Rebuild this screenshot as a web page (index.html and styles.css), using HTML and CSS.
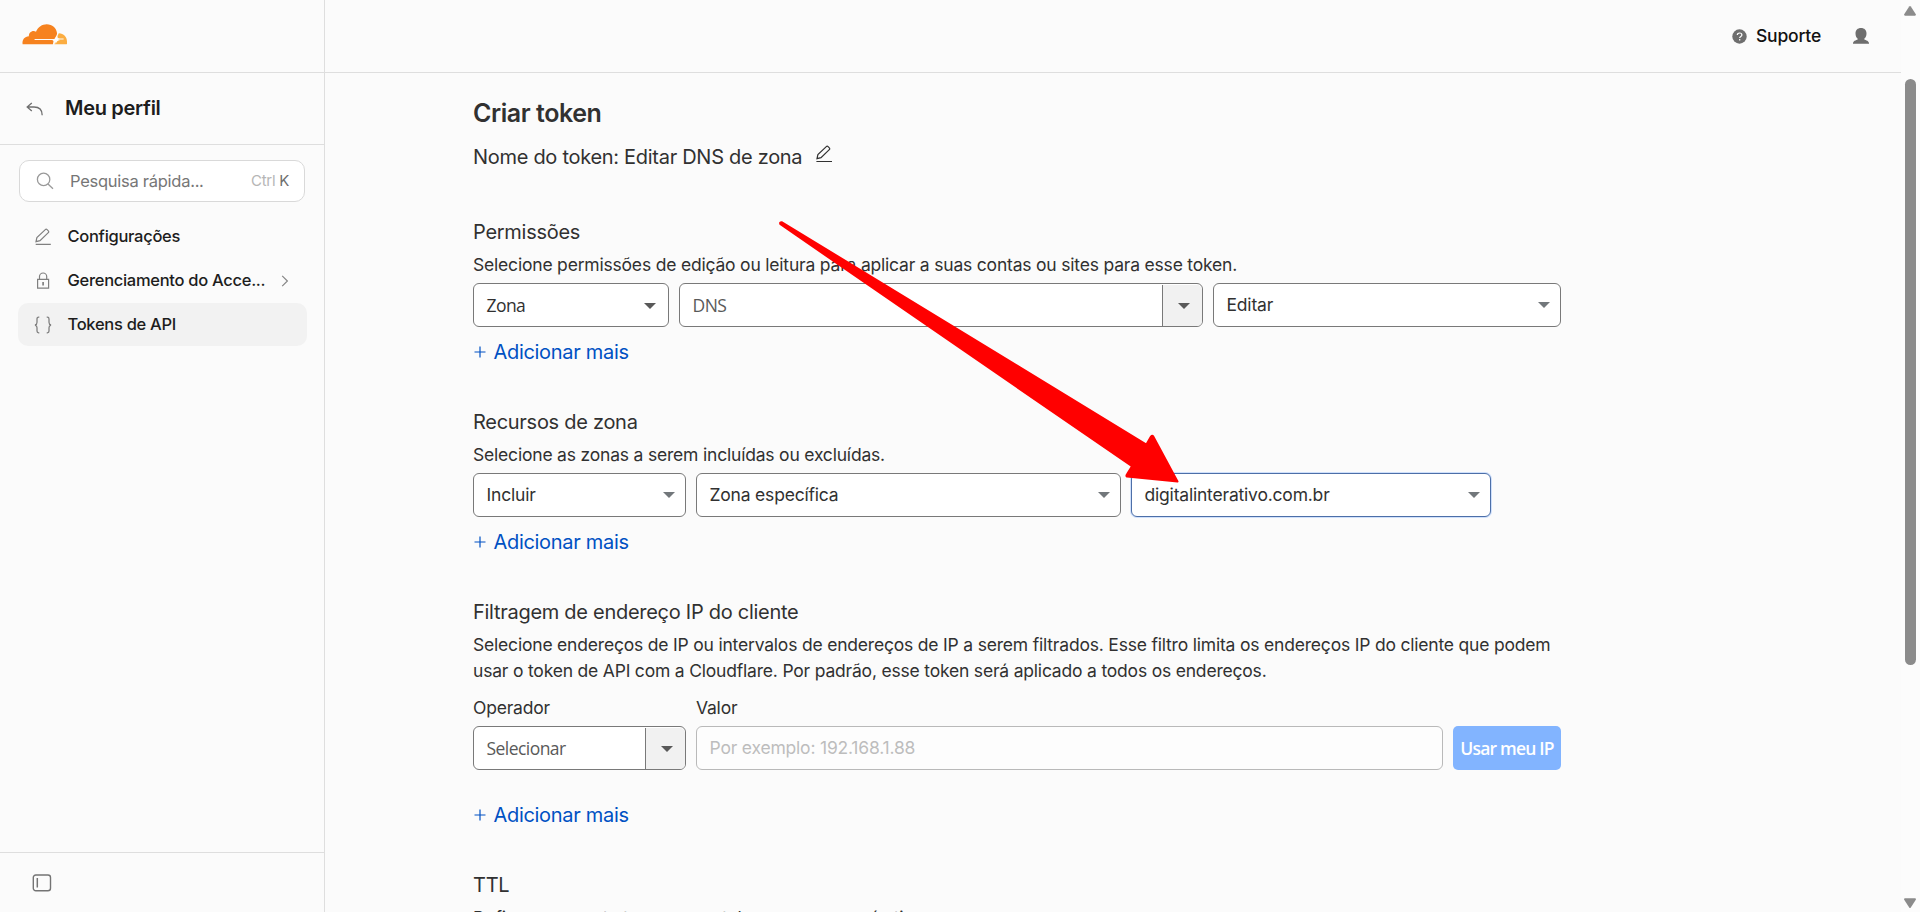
FILE: index.html
```html
<!DOCTYPE html>
<html lang="pt-BR">
<head>
<meta charset="utf-8">
<title>Criar token</title>
<link rel="stylesheet" href="styles.css">
</head>
<body>
<div class="app">
  <aside class="sidebar">
    <div class="brand">
      <svg class="logo" viewBox="0 0 46 21" width="46" height="21">
        <path fill="#fbad41" d="M36.8 9.2c5 0 8.2 3.7 8.2 8.200v2.400q0 .4-.4.4H32.500c1-3.500 2.600-4.800 5.500-4.800h3.600v-.9h-3.500c-2.200 0-3.200-1.100-2.300-3.200z"/>
        <path fill="#f6821f" d="M.6 20.200C0 15.800 2.600 12.400 6.900 12.300 6.500 8.500 10.500 5.800 14 7.700 16 3 20.200.3 24.700.3c5.600 0 9.700 3.600 10.300 8.800.2 1.700-.8 3-1.500 4.200l-1 1.700H12.600v1h18c.8.3 1 .9.800 1.700l-.5 2.500z"/>
        <path fill="#fff" d="M34.200 12.200q.4 3.300 3.900 3.800-3.500.5-4.300 3.900-.3-3.500-3.900-4 3.600-.5 4.300-3.700z"/>
      </svg>
    </div>
    <div class="profile">
      <svg class="back" viewBox="0 0 18 14" width="18" height="14" fill="none" stroke="#6f6f6f" stroke-width="1.3"><path d="M5.800 1 1.200 5l4.600 4M1.400 5H8c5.200 0 8.200 2.800 8.200 8.300"/></svg>
      <span class="profile-name">Meu perfil</span>
    </div>
    <div class="search">
      <svg viewBox="0 0 18 18" width="18" height="18" fill="none" stroke="#999" stroke-width="1.300"><circle cx="7.600" cy="7.400" r="6.200"/><path d="m12 12 5 4.800"/></svg>
      <span class="search-text">Pesquisa rápida...</span>
      <span class="keys">Ctrl <b>K</b></span>
    </div>
    <nav class="nav">
      <a class="item">
        <svg viewBox="0 0 18 18" width="18" height="18" fill="none" stroke="#808080" stroke-width="1.200"><path d="M1.700 16.300h15.100M2 13.600l.9-4L11.300 1.600q.9-.8 1.800.1l1.200 1.200q.9.9 0 1.800L6 12.700z"/></svg>
        <span>Configurações</span>
      </a>
      <a class="item">
        <svg viewBox="0 0 18 18" width="18" height="18" fill="none" stroke="#808080" stroke-width="1.200"><path d="M3.600 7.300h11v8.900h-11zM5.500 7.300V4.600a3.600 3.600 0 0 1 7.200 0v2.700"/><path stroke-width="1.700" d="M9.100 10v3.400"/></svg>
        <span>Gerenciamento do Acce...</span>
        <svg class="chev" viewBox="0 0 8 12" width="8" height="12" fill="none" stroke="#858585" stroke-width="1.200"><path d="m1.200.8 5.200 5.200-5.200 5.200"/></svg>
      </a>
      <a class="item active">
        <svg viewBox="0 0 18 18" width="18" height="18" fill="none" stroke="#808080" stroke-width="1.300"><path d="M5.300 1.200H4.700C3.400 1.200 3 2 3 3v3.200C3 7.800 2.400 8.700 1 9c1.400.3 2 1.200 2 2.800V15c0 1 .4 1.800 1.700 1.800h.6M12.700 1.200h.6C14.600 1.200 15 2 15 3v3.200c0 1.600.6 2.500 2 2.800-1.400.3-2 1.200-2 2.800V15c0 1-.4 1.800-1.700 1.800h-.6"/></svg>
        <span>Tokens de API</span>
      </a>
    </nav>
    <div class="side-foot">
      <svg viewBox="0 0 20 18" width="20" height="18" fill="none" stroke="#747474"><rect x="1.300" y="1" width="17.200" height="15.800" rx="2.500" stroke-width="1.400"/><path d="M5.300 4v9.500" stroke-width="1.500"/></svg>
    </div>
  </aside>

  <div class="page">
    <header class="topbar">
      <svg viewBox="0 0 15 15" width="15" height="15"><circle cx="7.500" cy="7.500" r="7.200" fill="#6e6e6e"/><path d="M5.300 6.100c0-1.300 1-2.100 2.300-2.100s2.300.8 2.300 1.900c0 1.600-2.200 1.500-2.200 3.200M7.700 10v1.400" fill="none" stroke="#fff" stroke-width="1.200"/></svg>
      <span class="support">Suporte</span>
      <svg class="user" viewBox="0 0 16 16" width="16" height="16"><path fill="#6e6e6e" d="M8 0c3.400 0 5.500 2.200 5.500 5.400 0 2.300-.9 4.300-2.500 5.500.3 1 4.700 1.300 5 4.100v.8H0V15c.3-2.800 4.700-3.100 5-4.100C3.400 9.700 2.500 7.700 2.500 5.400 2.500 2.200 4.600 0 8 0z"/></svg>
    </header>
    <main class="content">
      <h1 class="title">Criar token</h1>
      <div class="token-name">
        <span>Nome do token: Editar DNS de zona</span>
        <svg viewBox="0 0 18 18" width="18" height="18" fill="none" stroke="#313131" stroke-width="1.200"><path d="M1.400 16.500h15.600M2 13.600l.9-4L11.300 1.600q.9-.8 1.800.1l1.200 1.200q.9.900 0 1.800L6 12.700z"/></svg>
      </div>

      <section class="block">
        <h2>Permissões</h2>
        <p>Selecione permissões de edição ou leitura para aplicar a suas contas ou sites para esse token.</p>
        <div class="row row-perm">
          <div class="field dark-caret"><span class="sys">Zona</span><i class="caret"></i></div>
          <div class="field split"><span class="sys dns">DNS</span><span class="drop"><i class="caret"></i></span></div>
          <div class="field"><span>Editar</span><i class="caret"></i></div>
        </div>
        <a class="add"><svg viewBox="0 0 12 12" width="12" height="12"><path d="M6 .5v11M.5 6h11" stroke="#0051c3" stroke-width="1.200"/></svg><span>Adicionar mais</span></a>
      </section>

      <section class="block">
        <h2>Recursos de zona</h2>
        <p>Selecione as zonas a serem incluídas ou excluídas.</p>
        <div class="row row-zone">
          <div class="field"><span>Incluir</span><i class="caret"></i></div>
          <div class="field"><span>Zona específica</span><i class="caret"></i></div>
          <div class="field focus"><span>digitalinterativo.com.br</span><i class="caret"></i></div>
        </div>
        <a class="add"><svg viewBox="0 0 12 12" width="12" height="12"><path d="M6 .5v11M.5 6h11" stroke="#0051c3" stroke-width="1.200"/></svg><span>Adicionar mais</span></a>
      </section>

      <section class="block">
        <h2>Filtragem de endereço IP do cliente</h2>
        <p>Selecione endereços de IP ou intervalos de endereços de IP a serem filtrados. Esse filtro limita os endereços IP do cliente que podem<br>usar o token de API com a Cloudflare. Por padrão, esse token será aplicado a todos os endereços.</p>
        <div class="row row-ip labels"><span>Operador</span><span>Valor</span></div>
        <div class="row row-ip">
          <div class="field split"><span class="sys sel">Selecionar</span><span class="drop"><i class="caret"></i></span></div>
          <div class="field input"><span>Por exemplo: 192.168.1.88</span></div>
          <div class="button"><span>Usar meu IP</span></div>
        </div>
        <a class="add add-ip"><svg viewBox="0 0 12 12" width="12" height="12"><path d="M6 .5v11M.5 6h11" stroke="#0051c3" stroke-width="1.200"/></svg><span>Adicionar mais</span></a>
      </section>

      <section class="block">
        <h2>TTL</h2>
        <p>Defina por quanto tempo esse token permanecerá ativo.</p>
      </section>
    </main>
  </div>

  <div class="scrollbar">
    <svg viewBox="0 0 12 10" width="12" height="10"><path fill="#8b8b8b" d="M5.200.6q.8-1 1.600 0l5 7.600q.5 1.300-.8 1.500H1q-1.300-.2-.8-1.500z"/></svg>
    <div class="thumb"></div>
    <svg class="down" viewBox="0 0 12 10" width="12" height="10"><path fill="#8b8b8b" d="M5.200 9.400q.8 1 1.600 0l5-7.600Q12.300.5 11 .3H1Q-.3.5.2 1.800z"/></svg>
  </div>
</div>
<svg class="arrow" viewBox="0 0 1920 912" width="1920" height="912"><path fill="#f00" stroke="#f00" stroke-width="2" stroke-linejoin="round" d="M782 222.300 1146.400 444.500 1151 436.600q1.200-1.500 2.400 0L1177.500 481.500 1127 476.600q-1.200-.8 0-2.200L1132 466.300 780.500 224.300q-1.200-2.200 1.500-2z"/></svg>
</body>
</html>
```
FILE: styles.css
```css
* { box-sizing: border-box; }
body {
  margin: 0;
  background: #fbfbfb;
  color: #313131;
  font-family: Inter, "Liberation Sans", sans-serif;
  font-size: 17.5px;
  letter-spacing: -0.195px;
  overflow: hidden;
}
svg { display: block; flex: none; }
.app { display: flex; height: 912px; overflow: hidden; }

.sidebar {
  display: flex;
  flex-direction: column;
  flex: none;
  width: 325px;
  border-right: 1px solid #dedede;
}
.brand { height: 73px; padding: 24px 0 0 22px; border-bottom: 1px solid #dedede; }
.profile {
  display: flex;
  align-items: center;
  height: 72px;
  padding-left: 26px;
  border-bottom: 1px solid #dedede;
}
.profile-name { margin-left: 21px; padding-bottom: 2px; font-size: 20px; font-weight: 600; color: #1d1d1d; letter-spacing: -0.3px; }
.search {
  display: flex;
  align-items: center;
  height: 42px;
  margin: 15px 19px 0;
  padding: 0 15px 0 16px;
  background: #fff;
  border: 1px solid #d9d9d9;
  border-radius: 10px;
}
.search-text { margin-left: 16px; color: #767676; font-size: 16.5px; letter-spacing: -0.27px; }
.keys { margin-left: auto; padding-bottom: 1px; color: #b6b6b6; font-size: 15px; letter-spacing: -0.3px; }
.keys b { font-weight: 400; color: #6f6f6f; }
.nav { display: flex; flex-direction: column; gap: 1px; margin: 13px 17px 0 18px; }
.item {
  display: flex;
  align-items: center;
  height: 43px;
  padding: 0 18px 0 16px;
  border-radius: 10px;
  color: #1d1d1d;
  font-size: 16.5px;
  font-weight: 500;
  letter-spacing: -0.29px;
}
.item span { margin-left: 15.5px; padding-bottom: 2px; white-space: nowrap; }
.chev { margin-left: auto; }
.active { background: #f2f2f2; }
.side-foot { height: 60px; margin-top: auto; padding: 20.5px 0 0 31.5px; border-top: 1px solid #dedede; }

.page { flex: 1; min-width: 0; }
.topbar {
  display: flex;
  align-items: center;
  justify-content: flex-end;
  height: 73px;
  padding-right: 32px;
  border-bottom: 1px solid #dedede;
  color: #111;
}
.support { margin: 0 32px 0 9px; padding-bottom: 2px; font-weight: 500; font-size: 17.5px; }
.content { width: 1088px; margin-left: 148px; }
.title { margin: 0; padding-top: 24px; font-size: 25px; line-height: 32px; font-weight: 600; letter-spacing: -0.44px; }
.token-name { display: flex; height: 28px; margin-top: 14px; font-size: 20px; line-height: 28px; letter-spacing: -0.29px; white-space: nowrap; }
.token-name svg { margin: 2px 0 0 13px; }
.block { height: 190px; margin-top: 0; }
.token-name + .block { margin-top: 47px; }
.block h2 { margin: 0; font-size: 20px; line-height: 28px; font-weight: 400; letter-spacing: -0.28px; }
.block p { margin: 6px 0 5px; line-height: 26px; white-space: nowrap; }
.block:nth-of-type(3) { height: 273px; }
.row { display: grid; column-gap: 10px; }
.row-perm { grid-template-columns: 196px 524px 348px; }
.row-zone { grid-template-columns: 213px 425px 360px; }
.row-ip { grid-template-columns: 213px 747px 108px; }
.labels { margin-top: 11px; height: 31px; line-height: 26px; }
.field {
  display: flex;
  align-items: center;
  justify-content: space-between;
  height: 44px;
  padding: 0 10.500px 0 12.5px;
  background: #fff;
  border: 1px solid #797979;
  border-radius: 6px;
  white-space: nowrap;
}
.field > span:first-child { padding-bottom: 1.5px; }
.caret { border: 6px solid transparent; border-top: 6px solid #72777b; border-bottom: 0; }
.dark-caret .caret, .drop .caret { border-top-color: #595959; margin-top: 1px; }
.dark-caret { padding-right: 12px; }
.field > .sys { padding: 1px 0 0; font-family: "Open Sans", "Noto Sans", sans-serif; letter-spacing: -0.55px; }
.dns, .sel { color: #595959; }
.split { padding-right: 0; }
.drop {
  display: flex;
  align-items: center;
  justify-content: center;
  width: 40.5px;
  height: 41px;
  padding-left: 2.5px;
  background: #f1f1f1;
  border-left: 1px solid #797979;
  border-radius: 0 5px 5px 0;
}
.focus { border-color: #4d6fa8; box-shadow: 0 0 0 1px #cfe0fb; }
.input { border-color: #b9b9b9; color: #bdbdbd; background: #fdfdfd; }
.button {
  display: flex;
  align-items: center;
  justify-content: center;
  height: 44px;
  border-radius: 5px;
  background: #82b4ff;
  color: #fff;
  font-family: "Open Sans", "Noto Sans", sans-serif;
  font-weight: 600;
  letter-spacing: -0.8px;
  white-space: nowrap;
}
.add { display: flex; align-items: center; height: 28px; margin-top: 11px; padding-left: 1px; color: #0051c3; font-size: 20px; line-height: 28px; letter-spacing: -0.31px; }
.add span { margin-left: 7.5px; }
.add-ip { margin-top: 31px; }

.scrollbar {
  display: flex;
  flex-direction: column;
  flex: none;
  width: 19px;
  height: 912px;
  padding: 6px 0 0 3px;
  background: #fcfcfc;
}
.thumb { width: 11px; height: 586px; margin: 63px 0 0 1px; border-radius: 6px; background: #8b8b8b; }
.down { margin: auto 0 4px; }
.arrow { position: absolute; left: 0; top: 0; pointer-events: none; }
```
